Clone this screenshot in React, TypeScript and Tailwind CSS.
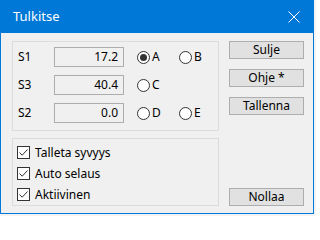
import React from "react";

const font = { fontFamily: '"Noto Sans", "Open Sans", sans-serif' };

function Field({ value }: { value: string }) {
  return (
    <div className="w-[70px] h-[20px] border border-[#adadad] bg-[#f0f0f0] flex items-center justify-end pr-[5px] text-[12px] text-black leading-none">
      {value}
    </div>
  );
}

function Radio({ label, checked }: { label: string; checked?: boolean }) {
  return (
    <div className="flex items-center gap-[2px] text-[12px] text-black leading-none">
      <div className="w-[13px] h-[13px] rounded-full border border-[#333333] bg-white flex items-center justify-center">
        {checked && <div className="w-[7px] h-[7px] rounded-full bg-[#333333]" />}
      </div>
      <span>{label}</span>
    </div>
  );
}

function Check({ label }: { label: string }) {
  return (
    <div className="flex items-center gap-[5px] h-[21px] text-[12px] text-black leading-none">
      <div className="w-[13px] h-[13px] border border-[#333333] bg-white flex items-center justify-center">
        <svg width="11" height="11" viewBox="0 0 11 11">
          <path d="M1.5 5.5 L4.2 8.2 L9.5 2.5" fill="none" stroke="#333333" strokeWidth="1" />
        </svg>
      </div>
      <span>{label}</span>
    </div>
  );
}

function Btn({ label }: { label: string }) {
  return (
    <div className="w-[75px] h-[18px] border border-[#adadad] bg-[#e1e1e1] flex items-center justify-center text-[12px] text-black leading-none">
      {label}
    </div>
  );
}

export default function App() {
  return (
    <div className="w-[316px] h-[216px] bg-[#f3f3f3]" style={font}>
      <div className="w-[314px] h-[214px] border-l border-r border-b border-[#0078d7] bg-[#f0f0f0] flex flex-col">
        <div className="h-[33px] bg-[#0078d7] flex items-center justify-between pl-[12px] pr-[13px] shrink-0">
          <span className="text-white text-[13px] leading-none">Tulkitse</span>
          <svg width="12" height="12" viewBox="0 0 12 12">
            <path d="M0.5 0.5 L11.5 11.5 M11.5 0.5 L0.5 11.5" stroke="#ffffff" strokeWidth="1" />
          </svg>
        </div>
        <div className="flex pt-[8px] pl-[11px] gap-[10px]">
          <div className="flex flex-col gap-[7px]">
            <div className="w-[207px] h-[90px] border border-[#dcdcdc] flex flex-col pt-[5px] gap-[8px]">
              <div className="flex items-center h-[20px]">
                <span className="w-[41px] pl-[5px] text-[12px] leading-none">S1</span>
                <Field value="17.2" />
                <div className="ml-[13px] w-[42px]"><Radio label="A" checked /></div>
                <Radio label="B" />
              </div>
              <div className="flex items-center h-[20px]">
                <span className="w-[41px] pl-[5px] text-[12px] leading-none">S3</span>
                <Field value="40.4" />
                <div className="ml-[13px] w-[42px]"><Radio label="C" /></div>
              </div>
              <div className="flex items-center h-[20px]">
                <span className="w-[41px] pl-[5px] text-[12px] leading-none">S2</span>
                <Field value="0.0" />
                <div className="ml-[13px] w-[42px]"><Radio label="D" /></div>
                <Radio label="E" />
              </div>
            </div>
            <div className="w-[207px] h-[68px] border border-[#dcdcdc] flex flex-col pl-[4px] pt-[3px]">
              <Check label="Talleta syvyys" />
              <Check label="Auto selaus" />
              <Check label="Aktiivinen" />
            </div>
          </div>
          <div className="flex flex-col h-[165px]">
            <div className="flex flex-col gap-[10px]">
              <Btn label="Sulje" />
              <Btn label="Ohje *" />
              <Btn label="Tallenna" />
            </div>
            <div className="mt-auto">
              <Btn label="Nollaa" />
            </div>
          </div>
        </div>
      </div>
    </div>
  );
}
